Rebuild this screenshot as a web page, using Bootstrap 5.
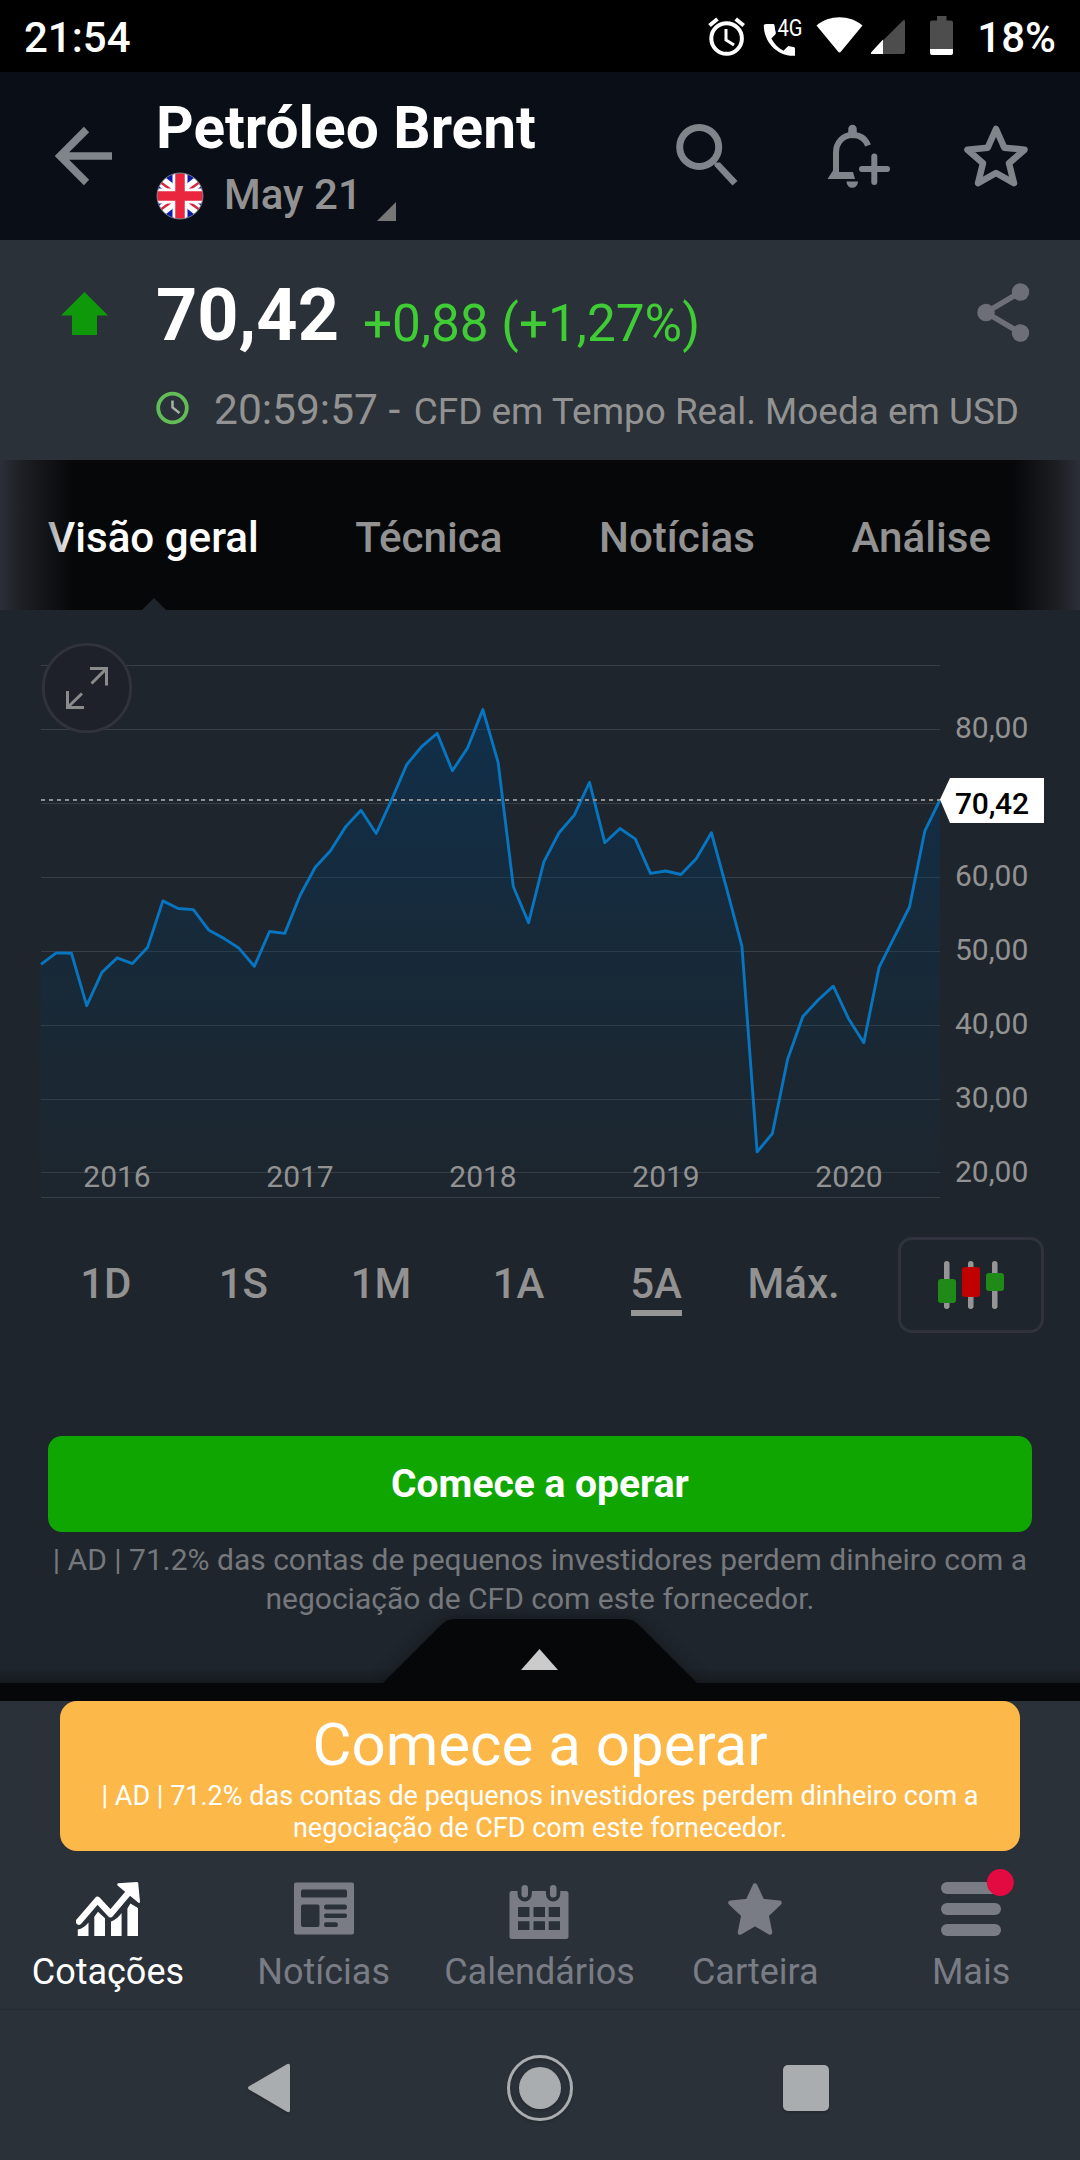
<!DOCTYPE html>
<html lang="pt">
<head>
<meta charset="utf-8">
<meta name="viewport" content="width=device-width, initial-scale=1">
<title>Petróleo Brent</title>
<link href="https://cdn.jsdelivr.net/npm/bootstrap@5.3.0/dist/css/bootstrap.min.css" rel="stylesheet">
<style>
  body { font-family: Roboto, "Liberation Sans", sans-serif; background: #2a3138; color: #fff; }
  .screen { width: 1080px; height: 2160px; overflow: hidden; background: #1f252c; }
  .screen svg { display: block; flex: none; }
  .muted { color: #929292; }
  .statusbar { height: 72px; background: #000; font-size: 42px; font-weight: 500; padding: 0 24px; line-height: 75px; }
  .status-level { margin-left: 7px; }
  .topbar { height: 168px; background: #0a0e16; padding: 0 50px 0 55px; color: #80858c; }
  .topbar-text { padding-left: 41px; }
  .topbar-title { font-size: 58.6px; font-weight: 700; line-height: 64px; color: #fff; margin-top: 24px; }
  .contract { font-size: 42px; font-weight: 500; line-height: 50px; margin-top: 10px; }
  .contract-name { margin-left: 20px; }
  .contract-flag { position: relative; top: 1px; }
  .contract-caret { margin: 0 0 -1px 15px; }
  .quote { height: 220px; background: #2a3138; padding: 0 50px 0 60px; }
  .quote-text { padding: 36px 0 0 47px; }
  .quote-arrow { margin-top: 51px; }
  .price { font-size: 72px; font-weight: 700; line-height: 80px; }
  .change { font-size: 51.300px; color: #3fcc35; line-height: 80px; margin-left: 24px; padding-top: 8px; }
  .quote-time { font-size: 42.500px; line-height: 50px; margin-top: 20.500px; }
  .quote-clock { margin-top: 6px; }
  .quote-stamp { margin-left: 24px; }
  .quote-note { font-size: 36.900px; margin-left: 3px; }
  .quote-share { margin: 41px 0 0 -56px; }
  .tabs { height: 150px; background: #060709; padding-left: 48px; font-size: 42.150px; font-weight: 500; gap: 96.500px; line-height: 156px; }
  .tabs::after { content: ""; position: absolute; inset: 0; pointer-events: none;
    background: linear-gradient(90deg, #2c2f38 0, rgba(32,35,40,.85) 22px, rgba(6,7,9,0) 74px, rgba(6,7,9,0) 1013px, rgba(32,35,40,.85) 1058px, #2c2f38 1080px); }
  .tab-notch { position: absolute; left: 142px; bottom: 0; }
  .ranges { height: 96px; padding: 0 36px 0 37px; font-size: 42px; font-weight: 500; line-height: 93px; }
  .ranges .range-list { width: 825.500px; }
  .range-on { position: relative; }
  .range-on::after { content: ""; position: absolute; left: 0; right: 0; top: 73px; height: 6px; background: #959595; width: 51px; margin: 0 auto; }
  .candle-btn { width: 146px; height: 96px; border: 3px solid #30333d; border-radius: 14px; }
  .cta { height: 96px; margin: 103px 48px 0; border-radius: 14px; background: #10a602; font-size: 39px; font-weight: 700; line-height: 96px; width: 984px; border: 0; padding: 0; color: #fff; }
  .risk { font-size: 30px; line-height: 39px; color: #75787c; margin: 8px 0 1px; }
  .drawer-tab { filter: drop-shadow(0 0 7px rgba(6,7,9,.5)); }
  .drawer-edge { height: 18px; background: #060709; }
  .adzone { background: #2a3138; }
  .ad { width: 960px; height: 150px; border-radius: 17px; background: #fdb84a; }
  .ad-title { font-size: 60px; line-height: 70px; padding-top: 9px; }
  .ad-note { font-size: 27px; line-height: 31.500px; padding-top: 1px; }
  .bottomnav { height: 159px; background: #2a3138; color: #797c85; border-bottom: 1px solid #252b31; font-size: 36px; line-height: 44px; padding-right: 1px; }
  .bottomnav .item-icon { height: 99px; padding-top: 31px; }
  .sysnav { height: 150px; background: #2a3138; }
  .sysnav svg { filter: drop-shadow(0 2px 1px rgba(0,0,0,.15)); }
</style>
</head>
<body>
<div class="screen d-flex flex-column">

  <div class="statusbar d-flex justify-content-between">
    <span>21:54</span>
    <div class="d-flex">
      <svg width="270" height="72" viewBox="700 0 270 72" fill="#fff">
        <g fill="none" stroke="#fff">
          <circle cx="726.6" cy="38.5" r="15.3" stroke-width="4"/>
          <path d="M726 29v11l8 5" stroke-width="3"/>
          <path d="M709.5 25.5l8-6.500M735.700 19l8 6.500" stroke-width="4"/>
        </g>
        <path d="M766 24h7c1 0 1.500.6 1.600 1.500.2 2.500.5 4.800 1.200 7 .2.7 0 1.400-.5 1.900l-4 4c3 5.500 7 9.500 12.200 12.300l4-4c.5-.5 1.200-.7 1.900-.5l4 .8c1 .2 1.600.8 1.600 1.800v7c-17 1-31-13-31.200-30 0-1 .8-1.800 2.200-1.800z"/>
        <text x="777.500" y="36" font-size="24" font-weight="400" textLength="25" lengthAdjust="spacingAndGlyphs">4G</text>
        <path d="M816.500 25.500C829 14.500 850 14.500 862.500 25.500L841 51.500c-.9 1.200-2.100 1.200-3 0z"/>
        <path d="M903 20.500q2-1.500 2 1V52q0 2-2 2H872q-2 0-.5-2z" fill="#4d4d4d"/>
        <path d="M883 39.500V54h-11q-2 0-.5-2z"/>
        <path d="M937 16h9.500v4.500H951q2 0 2 2V49h-23V22.500q0-2 2-2h5z" fill="#4d4d4d"/>
        <path d="M930 49h23v4q0 2-2 2h-19q-2 0-2-2z"/>
      </svg>
      <span class="status-level">18%</span>
    </div>
  </div>

  <header class="topbar d-flex">
    <svg class="my-auto" width="60" height="60" viewBox="0 0 60 60" fill="none" stroke="currentColor" stroke-width="7.500"><path d="M57 30H6M31.500 3.500L5 30l26.500 26.500"/></svg>
    <div class="topbar-text flex-grow-1">
      <div class="topbar-title">Petróleo Brent</div>
      <div class="contract muted d-flex align-items-center">
        <svg class="contract-flag" width="48" height="48" viewBox="0 0 48 48">
          <clipPath id="disc"><circle cx="24" cy="24" r="23"/></clipPath>
          <g clip-path="url(#disc)">
            <path d="M0 0h48v48H0z" fill="#0c1aa6"/>
            <path d="M0 5l48 38M48 5L0 43" stroke="#fff" stroke-width="11"/>
            <path d="M0 7l18 13M48 7L30 20M0 41l18-13M48 41L30 28" stroke="#d8283f" stroke-width="2.500"/>
            <path d="M24 0v48M0 24h48" stroke="#fff" stroke-width="15"/>
            <path d="M24 0v48M0 24h48" stroke="#e9263e" stroke-width="9.500"/>
          </g>
          <circle cx="24" cy="24" r="23" fill="none" stroke="#777b88" stroke-width="1"/>
        </svg>
        <span class="contract-name">May 21</span>
        <svg class="contract-caret align-self-end" width="19" height="19" viewBox="0 0 19 19"><path d="M19 0v19H0z" fill="#767676"/></svg>
      </div>
    </div>
    <svg width="355" height="168" viewBox="675 72 355 168" fill="none" stroke="currentColor">
      <circle cx="699.200" cy="147" r="19.500" stroke-width="7"/>
      <path d="M714.500 162.500h5.500l17.500 18.500-5 4.500-18-19.500z" fill="currentColor" stroke="none"/>
      <path d="M836 177v-24.500c0-10 7-17.500 16.500-17.500 7.500 0 13 4 15.500 10.500" stroke-width="6"/>
      <path d="M852.500 129v5" stroke-width="8.500" stroke-linecap="round"/>
      <path d="M827.500 179l6.500-10 5 3h14l2 7z" fill="currentColor" stroke="none"/>
      <path d="M846.500 181.500h11.500a5.700 6.300 0 0 1-11.500 0z" fill="currentColor" stroke="none"/>
      <path d="M874.300 156.500v25.500M862 169h25" stroke-width="6" stroke-linecap="round"/>
      <path d="M996 129l8.300 18.700 20.200 2-15.500 13.500 5 20L996 173l-18 10.200 5-20-15.500-13.500 20.200-2z" stroke-width="6.500" stroke-linejoin="round"/>
    </svg>
  </header>

  <section class="quote d-flex">
    <svg class="quote-arrow" width="49" height="45" viewBox="0 0 49 45"><path d="M24.500 1L48 24.500H37V44H12V24.500H1z" fill="#0f990a"/></svg>
    <div class="quote-text flex-grow-1">
      <div class="d-flex">
        <span class="price">70,42</span>
        <span class="change">+0,88 (+1,27%)</span>
      </div>
      <div class="quote-time muted d-flex text-nowrap">
        <svg class="quote-clock" width="34" height="34" viewBox="0 0 34 34" fill="none"><circle cx="16.500" cy="17" r="14.300" stroke="#62bd56" stroke-width="3.800"/><path d="M16.500 9.500v7l7 5.500" stroke="#a5b3a5" stroke-width="2.500"/></svg>
        <span class="quote-stamp">20:59:57 - <span class="quote-note">CFD em Tempo Real. Moeda em USD</span></span>
      </div>
    </div>
    <svg class="quote-share" width="56" height="64" viewBox="0 0 56 64" fill="#6c6f78" stroke="#6c6f78"><path d="M46.500 11L12 31.500 46.500 52" fill="none" stroke-width="5.500"/><g stroke="none"><circle cx="46.500" cy="11" r="8.700"/><circle cx="12" cy="31.500" r="8.700"/><circle cx="46.500" cy="52" r="8.700"/></g></svg>
  </section>

  <nav class="tabs d-flex position-relative text-nowrap muted">
    <span class="text-white">Visão geral</span><span>Técnica</span><span>Notícias</span><span>Análise</span>
    <svg class="tab-notch" width="24" height="12" viewBox="0 0 24 12"><path d="M12 0l12 12H0z" fill="#1f252c"/></svg>
  </nav>

  <svg width="1080" height="627" viewBox="0 0 1080 627">
    <defs>
      <linearGradient id="area" gradientUnits="userSpaceOnUse" x1="0" y1="234" x2="0" y2="1509">
        <stop offset="0" stop-color="#003c70" stop-opacity=".46"/><stop offset="1" stop-color="#00324f" stop-opacity=".06"/>
      </linearGradient>
    </defs>
    <path d="M41 55.500H940M41 119.500H940M41 193.500H940M41 267.500H940M41 341.500H940M41 415.500H940M41 489.500H940M41 562.500H940M41 587.500H940" stroke="#373f47" stroke-width="1"/>
    <g transform="translate(41 10) scale(15.237 .38265)">
      <path fill="url(#area)" d="M0 900L1 870 2 871 3 1008 4 921 5 883 6 898 7 855 8 734 9 754 10 757 11 810 12 832 13 858 14 905 15 814 16 819 17 720 18 646 19 603 20 540 21 497 22 558 23 471 24 378 25 330 26 296 27 394 28 334 29 234 30 372 31 697 32 791 33 632 34 556 35 510 36 424 37 582 38 545 39 572 40 662 41 656 42 665 43 624 44 556 45 702 46 852 47 1390 48 1342 49 1148 50 1036 51 993 52 957 53 1042 54 1105 55 908 56 829 57 750 58 552 59 470V1509H0z"/>
      <path fill="none" stroke="#0775c0" stroke-width="2.900" vector-effect="non-scaling-stroke" stroke-linejoin="round" d="M0 900L1 870 2 871 3 1008 4 921 5 883 6 898 7 855 8 734 9 754 10 757 11 810 12 832 13 858 14 905 15 814 16 819 17 720 18 646 19 603 20 540 21 497 22 558 23 471 24 378 25 330 26 296 27 394 28 334 29 234 30 372 31 697 32 791 33 632 34 556 35 510 36 424 37 582 38 545 39 572 40 662 41 656 42 665 43 624 44 556 45 702 46 852 47 1390 48 1342 49 1148 50 1036 51 993 52 957 53 1042 54 1105 55 908 56 829 57 750 58 552 59 470"/>
    </g>
    <path d="M41 190H940" stroke="#8d8f90" stroke-width="1.800" stroke-dasharray="4 4"/>
    <g fill="#929292" font-size="30">
      <g>
        <text x="955" y="128">80,00</text><text x="955" y="276">60,00</text><text x="955" y="350">50,00</text>
        <text x="955" y="424">40,00</text><text x="955" y="498">30,00</text><text x="955" y="572">20,00</text>
      </g>
      <g text-anchor="middle">
        <text x="117" y="577">2016</text><text x="300" y="577">2017</text><text x="483" y="577">2018</text>
        <text x="666" y="577">2019</text><text x="849" y="577">2020</text>
      </g>
    </g>
    <path d="M940 189.500l10-21.500h94v45h-94z" fill="#fff"/>
    <text x="955" y="204" font-size="30" font-weight="500" fill="#000" textLength="74">70,42</text>
    <circle cx="87" cy="78" r="43.700" fill="#1f212a" stroke="#30333c" stroke-width="2.800"/>
    <path d="M90 58.500h16.500v17M106 59L91.500 73.500M67.500 81v16.500H84M68 97l14-13.500" fill="none" stroke="#8b8b8b" stroke-width="3"/>
  </svg>

  <div class="ranges d-flex justify-content-between">
    <div class="range-list d-flex text-center muted">
      <div class="col-2">1D</div><div class="col-2">1S</div><div class="col-2">1M</div>
      <div class="col-2">1A</div><div class="col-2 range-on">5A</div><div class="col-2">Máx.</div>
    </div>
    <div class="candle-btn d-flex align-items-center justify-content-center">
      <svg width="68" height="48" viewBox="0 0 68 48">
        <g fill="#959595"><rect x="7" width="5.500" height="48" rx="2.700"/><rect x="31" width="5.500" height="48" rx="2.700"/><rect x="55" width="5.500" height="48" rx="2.700"/></g>
        <rect x="1" y="18" width="18" height="24" rx="3" fill="#208a19"/><rect x="25" y="6" width="18" height="30" rx="3" fill="#c10000"/><rect x="49" y="12" width="18" height="18" rx="3" fill="#208a19"/>
      </svg>
    </div>
  </div>

  <button class="cta flex-shrink-0" type="button">Comece a operar</button>
  <p class="risk text-center">| AD | 71.2% das contas de pequenos investidores perdem dinheiro com a<br>negociação de CFD com este fornecedor.</p>

  <svg width="1080" height="64" viewBox="0 0 1080 64" overflow="visible">
    <defs><linearGradient id="fade" x2="0" y2="1"><stop offset="0" stop-color="#060709" stop-opacity="0"/><stop offset="1" stop-color="#060709" stop-opacity=".35"/></linearGradient></defs>
    <path d="M0 48h1080v16H0z" fill="url(#fade)"/>
    <path class="drawer-tab" d="M383 64L441 6q6-6 14-6h170q8 0 14 6l58 58z" fill="#060709"/>
    <path d="M539.500 30l18.500 21h-37z" fill="#cbcbcb"/>
  </svg>
  <div class="drawer-edge"></div>

  <div class="adzone d-flex justify-content-center">
    <div class="ad text-center">
      <div class="ad-title">Comece a operar</div>
      <div class="ad-note">| AD | 71.2% das contas de pequenos investidores perdem dinheiro com a<br>negociação de CFD com este fornecedor.</div>
    </div>
  </div>

  <nav class="bottomnav d-flex text-center">
    <div class="flex-fill w-25 text-white">
      <div class="item-icon d-flex justify-content-center">
        <svg width="64" height="56" viewBox="0 0 64 56"><path d="M3 39.500L21.500 18l13 14L54 9" fill="none" stroke="#fff" stroke-width="6.500" stroke-linecap="round" stroke-linejoin="round"/><path d="M42 1.300L61 0q1 0 1.200 1L64 20q-.4 1.500-1.500.8L41.500 3.500q-.8-1.600.5-2.200zM1.800 47.500q6-1 10.700-7V54H1.800zM18.300 34.700l3.700-5 7 6.600V54H18.300zM35 39.500q6-2 10.600-8.500V54H35zM51.400 26.500l3-5 7.600 4.500v28H51.400z" fill="#fff"/></svg>
      </div>Cotações
    </div>
    <div class="flex-fill w-25">
      <div class="item-icon d-flex justify-content-center">
        <svg width="60" height="53" viewBox="0 0 60 53"><path fill="currentColor" fill-rule="evenodd" d="M2 .5h56q2 0 2 2v48q0 2-2 2H2q-2 0-2-2v-48q0-2 2-2zM8.500 7.500q-1.500 0-1.500 1.500v5q0 1.500 1.500 1.500h43q1.500 0 1.500-1.500V9q0-1.500-1.500-1.500zM9 22.500q-2 0-2 2V43q0 2 2 2h14.500q2 0 2-2V24.500q0-2-2-2zM32 22.500q-2 0-2 2.500t2 2.500h19q2 0 2-2.500t-2-2.500zM32 31.500q-2 0-2 2.300t2 2.300h19q2 0 2-2.300t-2-2.300zM32 40.300q-2 0-2 2.400t2 2.300h10q2 0 2-2.300t-2-2.400z"/></svg>
      </div>Notícias
    </div>
    <div class="flex-fill w-25">
      <div class="item-icon d-flex justify-content-center">
        <svg width="60" height="58" viewBox="0 0 60 58"><path fill="currentColor" fill-rule="evenodd" d="M3 9h5.500v2.500a7.200 8 0 0 0 14.400 0V9h14v2.500a7.200 8 0 0 0 14.400 0V9H57q2.500 0 2.500 2.500V55q0 2-2.500 2H3q-2.500 0-2.500-2V11.500Q.5 9 3 9zM9 25v10h11.500V25zM24.500 25v10H36V25zM39.700 25v10H51V25zM9 39.300V48h11.500v-8.700zM24.500 39.300V48H36v-8.700zM39.700 39.300V48H51v-8.700z"/><rect x="12.500" y="3" width="6.500" height="12.500" rx="3.200" fill="currentColor"/><rect x="41" y="3" width="6.500" height="12.500" rx="3.200" fill="currentColor"/></svg>
      </div>Calendários
    </div>
    <div class="flex-fill w-25">
      <div class="item-icon d-flex justify-content-center">
        <svg width="56" height="54" viewBox="0 0 56 54"><path d="M28 3.500l7.200 15.500 17.300 1.800L39.500 33l3.500 17.500L28 41.800 13 50.500 16.500 33 3.500 20.800 20.800 19z" fill="currentColor" stroke="currentColor" stroke-width="4.500" stroke-linejoin="round"/></svg>
      </div>Carteira
    </div>
    <div class="flex-fill w-25">
      <div class="item-icon d-flex justify-content-center">
        <svg width="60" height="54" viewBox="0 0 60 54" overflow="visible"><g fill="currentColor"><rect width="60" height="12" rx="6"/><rect y="21" width="60" height="12" rx="6"/><rect y="42" width="60" height="12" rx="6"/></g><circle cx="59.300" cy=".5" r="13.500" fill="#e20a40"/></svg>
      </div>Mais
    </div>
  </nav>

  <div class="sysnav">
    <svg width="1080" height="150" viewBox="0 0 1080 150" fill="#a9adb0">
      <path d="M249 79.500q-2-1.500 0-3.200L286.500 54.500q3.500-2 3.500 1.500v44q0 3.500-3.500 1.500z"/>
      <circle cx="540" cy="78" r="31.500" fill="none" stroke="#a9adb0" stroke-width="3"/><circle cx="540" cy="78" r="21"/>
      <rect x="783" y="55" width="46" height="46" rx="5"/>
    </svg>
  </div>
</div>
<script src="https://cdn.jsdelivr.net/npm/bootstrap@5.3.0/dist/js/bootstrap.bundle.min.js"></script>
</body>
</html>
